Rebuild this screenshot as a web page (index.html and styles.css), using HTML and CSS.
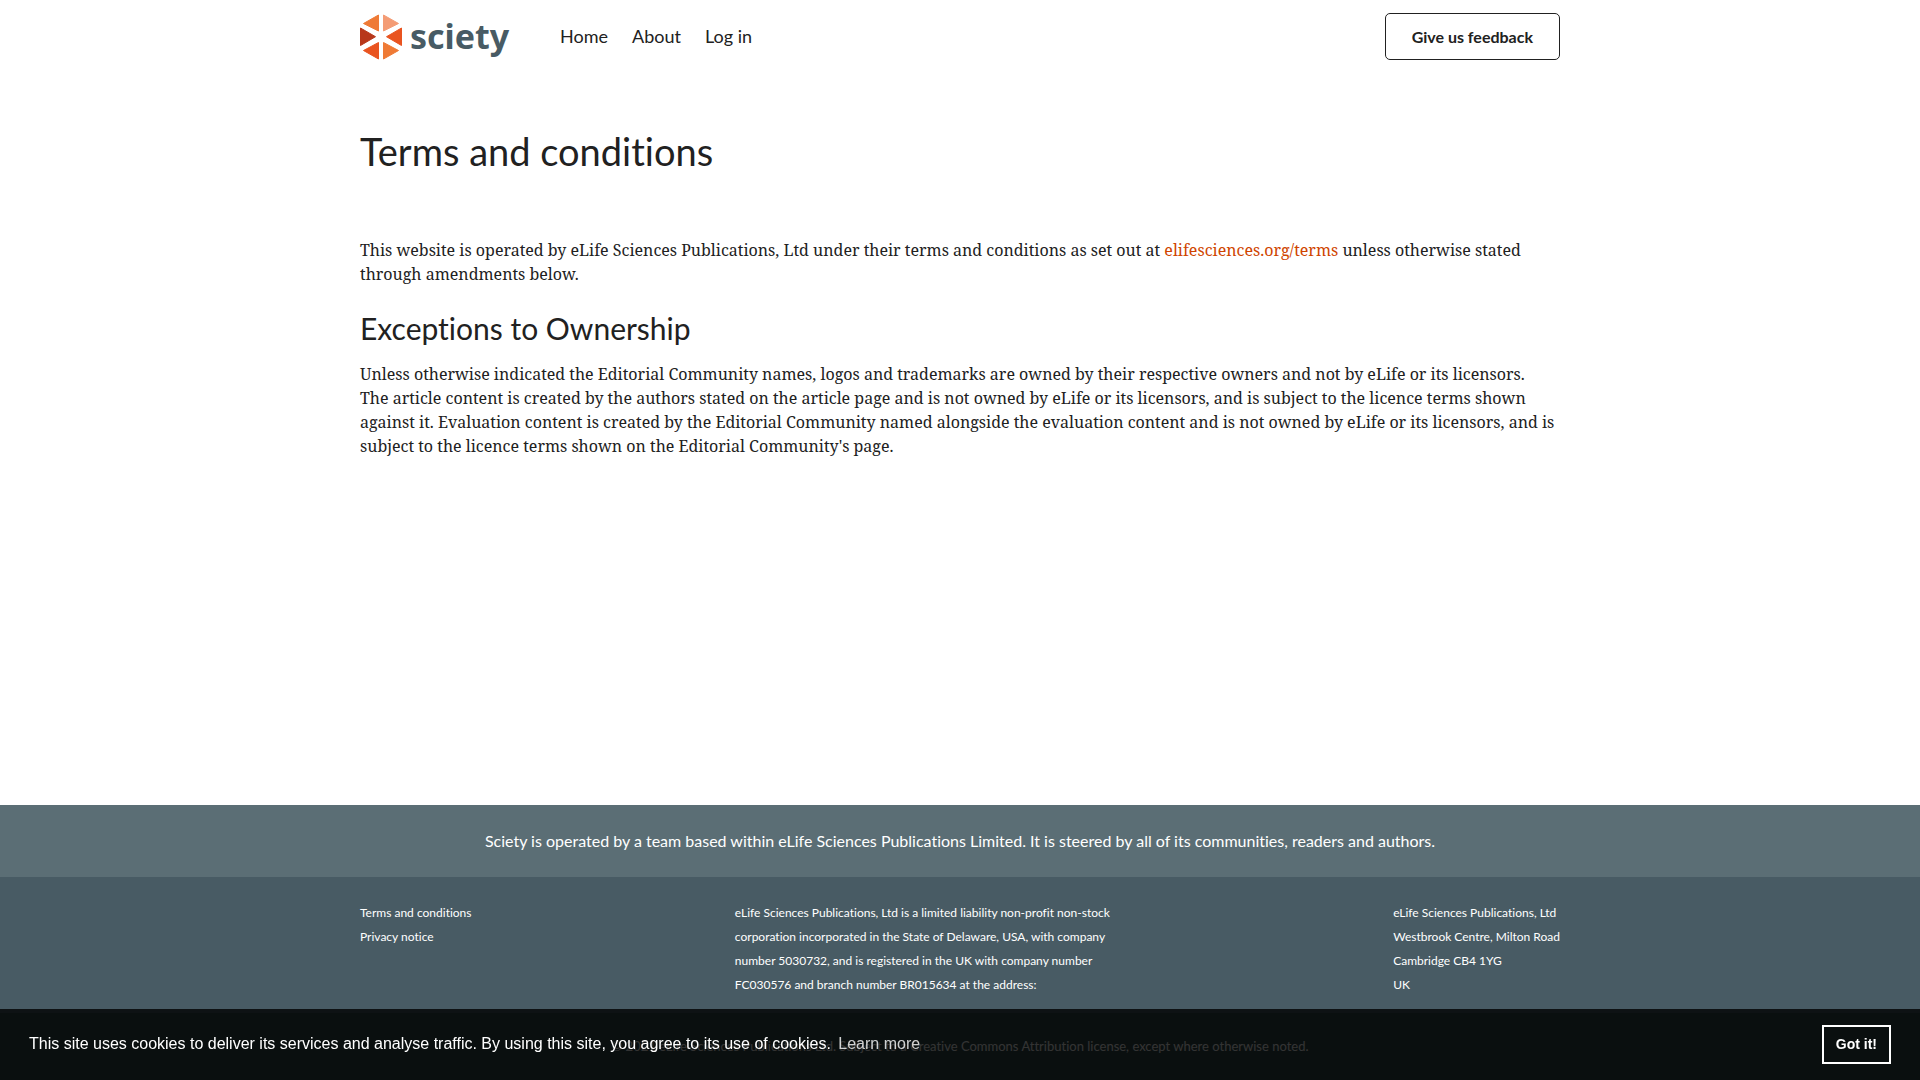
FILE: index.html
```html
<!DOCTYPE html>
<html lang="en">
<head>
<meta charset="utf-8">
<meta name="viewport" content="width=device-width, initial-scale=1">
<title>Terms and conditions | Sciety</title>
<link rel="stylesheet" href="styles.css">
</head>
<body>
<div class="page">
  <header class="site-header">
    <div class="container site-header__inner">
      <a class="logo" href="/" aria-label="Sciety">
        <svg class="logo__mark" viewBox="0 0 42 46" aria-hidden="true">
          <g stroke-linejoin="round">
            <path fill="#ef7a35" stroke="#ef7a35" d="M18.500 1V17L3.500 9.500Z"/>
            <path fill="#f49c75" stroke="#f49c75" d="M23.500 1V17L38.500 9.500Z"/>
            <path fill="#b8381b" stroke="#b8381b" d="M.500 14V31.500L15.500 22.700Z"/>
            <path fill="#e95420" stroke="#e95420" d="M41.500 14V31.500L26.500 22.700Z"/>
            <path fill="#e95420" stroke="#e95420" d="M18.500 45V28.500L3.500 36.500Z"/>
            <path fill="#ef7a35" stroke="#ef7a35" d="M23.500 45V28.500L38.500 36.500Z"/>
          </g>
        </svg>
        <span class="logo__text">sciety</span>
      </a>
      <nav class="site-nav">
        <a href="/">Home</a>
        <a href="/about">About</a>
        <a href="/log-in">Log in</a>
      </nav>
      <button class="feedback" type="button">Give us feedback</button>
    </div>
  </header>
  <main class="container content">
    <h1>Terms and conditions</h1>
    <p>This website is operated by eLife Sciences Publications, Ltd under their terms and conditions as set out at <a href="#">elifesciences.org/terms</a> unless otherwise stated through amendments below.</p>
    <h2>Exceptions to Ownership</h2>
    <p>Unless otherwise indicated the Editorial Community names, logos and trademarks are owned by their respective owners and not by eLife or its licensors. The article content is created by the authors stated on the article page and is not owned by eLife or its licensors, and is subject to the licence terms shown against it. Evaluation content is created by the Editorial Community named alongside the evaluation content and is not owned by eLife or its licensors, and is subject to the licence terms shown on the Editorial Community's page.</p>
  </main>
  <footer class="footer">
    <p class="footer__about">Sciety is operated by a team based within eLife Sciences Publications Limited. It is steered by all of its communities, readers and authors.</p>
    <div class="footer__details">
      <div class="container footer__columns">
        <ul class="footer__links">
          <li><a href="/terms">Terms and conditions</a></li>
          <li><a href="/privacy">Privacy notice</a></li>
        </ul>
        <p class="footer__company">eLife Sciences Publications, Ltd is a limited liability non-profit non-stock corporation incorporated in the State of Delaware, USA, with company number 5030732, and is registered in the UK with company number FC030576 and branch number BR015634 at the address:</p>
        <address>eLife Sciences Publications, Ltd<br>Westbrook Centre, Milton Road<br>Cambridge CB4 1YG<br>UK</address>
      </div>
    </div>
    <p class="footer__licence">© 2021 eLife Sciences Publications Ltd. Subject to a Creative Commons Attribution license, except where otherwise noted.</p>
  </footer>
</div>
<div class="cookies" role="dialog" aria-label="Cookie consent">
  <p class="cookies__message">This site uses cookies to deliver its services and analyse traffic. By using this site, you agree to its use of cookies. <a href="/privacy">Learn more</a></p>
  <button class="cookies__accept" type="button">Got it!</button>
</div>
</body>
</html>
```
FILE: styles.css
```css
* {
  box-sizing: border-box;
}

body {
  margin: 0;
  color: #212121;
  background: #fff;
  font: 16px/24px "Noto Serif", "Liberation Serif", serif;
  font-variant-ligatures: none;
}

a {
  color: #cf4500;
  text-decoration: none;
}

p,
ul,
h1,
h2 {
  margin: 0;
}

.page {
  display: flex;
  flex-direction: column;
  min-height: 100vh;
}

.container {
  width: 100%;
  max-width: 1200px;
  margin: 0 auto;
}

.site-header {
  padding: 13px 0 12px;
  font-family: Lato, sans-serif;
}

.site-header__inner {
  display: flex;
  align-items: center;
}

.logo {
  display: flex;
  align-items: center;
  gap: 8px;
  width: 200px;
  color: #485b64;
}

.logo__mark {
  width: 42px;
  height: 46px;
}

.logo__text {
  padding-bottom: 2px;
  font: bold 34px/40px "Noto Sans", sans-serif;
}

.site-nav {
  display: flex;
  gap: 24px;
  padding-bottom: 2px;
  font-size: 18px;
}

.site-nav a {
  color: inherit;
}

.feedback {
  margin-left: auto;
  padding: 11px 26px 10px;
  border: 1px solid #212121;
  border-radius: 5px;
  color: inherit;
  background: #fff;
  font: bold 16px/24px Lato, sans-serif;
}

.content {
  flex: 1;
  padding: 55px 0 48px;
}

.content p {
  max-width: 1196px;
}

h1,
h2 {
  font-family: Lato, sans-serif;
  font-weight: normal;
}

h1 {
  margin-bottom: 63px;
  font-size: 38px;
  line-height: 48px;
}

h2 {
  margin: 22px 0 14px;
  font-size: 30px;
  line-height: 40px;
}

.footer {
  color: #fff;
  background: #485b64;
  font: 12px/24px Lato, sans-serif;
  font-variant-ligatures: none;
}

.footer a {
  color: inherit;
}

.footer__about {
  padding: 24px;
  background: #5b6e75;
  font-size: 16px;
  text-align: center;
}

.footer__details {
  padding: 24px 0 0;
}

.footer__columns {
  display: flex;
  justify-content: space-between;
}

.footer__links {
  padding: 0;
  list-style: none;
}

.footer__company {
  width: 395px;
}

address {
  font-style: normal;
}

.footer__licence {
  margin-top: 16px;
  padding: 21px 24px 22px;
  color: #fff;
  background: #324b4b;
  font-size: 13px;
  text-align: center;
}

.cookies {
  position: fixed;
  right: 0;
  bottom: 0;
  left: 0;
  display: flex;
  align-items: center;
  padding: 16px 29px;
  color: #fff;
  background: rgb(0 0 0 / 80%);
  font: 16px/24px "Liberation Sans", sans-serif;
}

.cookies__message {
  flex: 1;
  padding-bottom: 2px;
}

.cookies__message a {
  padding: 3px;
  color: inherit;
  opacity: .8;
}

.cookies__accept {
  padding: 5px 12px;
  border: 2px solid #fff;
  color: #fff;
  background: transparent;
  font: bold 14px/25px "Liberation Sans", sans-serif;
}
```
